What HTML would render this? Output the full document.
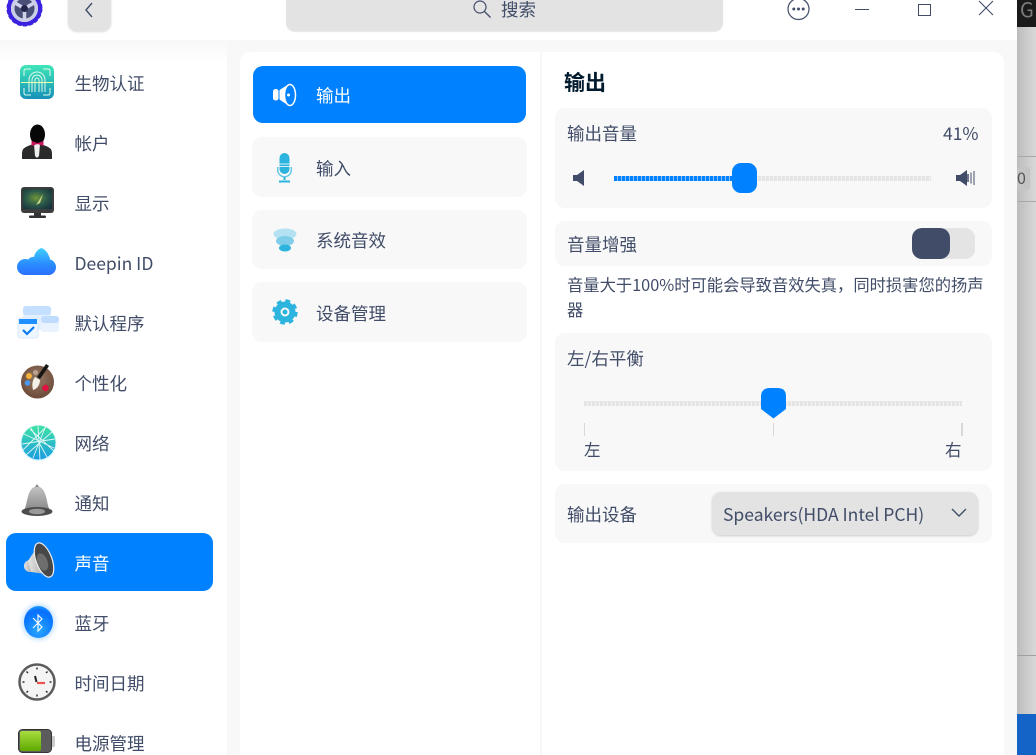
<!DOCTYPE html>
<html><head><meta charset="utf-8"><style>
*{box-sizing:border-box;margin:0;padding:0}
html,body{width:1036px;height:755px;overflow:hidden;background:#fff}
body{position:relative;font-family:"Liberation Sans","Noto Sans CJK SC",sans-serif;color:#414d68;font-size:17.5px}
.a{position:absolute}
.t{position:absolute;white-space:nowrap;line-height:24px;font-family:"Noto Sans CJK SC","Liberation Sans",sans-serif}
.c{position:absolute;background:#f8f8f8;border-radius:10px}
svg{position:absolute;overflow:visible}
</style></head><body>
<!-- right backdrop -->
<div class="a" style="left:1017px;top:0;width:19px;height:755px;background:linear-gradient(90deg,#bcbcbc,#d9d9d9)"></div>
<div class="a" style="left:1017px;top:0;width:19px;height:27px;background:#1a1a1a"></div>
<div class="t" style="left:1020px;top:-3px;color:#7d7d7d;font-size:20px">G</div>
<div class="a" style="left:1017px;top:156px;width:19px;height:1px;background:#a8a8a8"></div>
<div class="a" style="left:1017px;top:201px;width:19px;height:1px;background:#a8a8a8"></div>
<div class="a" style="left:1017px;top:167px;width:13px;height:23px;background:#c4c4c4;border-radius:3px"></div>
<div class="t" style="left:1017px;top:165px;color:#555;font-size:16px">0</div>
<div class="a" style="left:1017px;top:655px;width:19px;height:1px;background:#a0a0a0"></div>
<div class="a" style="left:1017px;top:714px;width:19px;height:41px;background:#1464c8"></div>
<!-- window -->
<div class="a" style="left:0;top:0;width:1017px;height:755px;background:#fff"></div>
<div class="a" style="left:0;top:40px;width:1017px;height:715px;background:#f8f8f8"></div>
<div class="a" style="left:0;top:40px;width:227px;height:715px;background:linear-gradient(#f8f8f8,#fff 22px)"></div>
<div class="a" style="left:240px;top:52px;width:300px;height:703px;background:#fff;border-radius:10px 0 0 0"></div>
<div class="a" style="left:542px;top:52px;width:462px;height:703px;background:#fff;border-radius:0 10px 0 0"></div>
<!-- titlebar -->
<svg style="left:7px;top:-9px" width="35" height="35" viewBox="0 0 35 35"><circle cx="17.500" cy="17.500" r="15.500" fill="none" stroke="#3a22e0" stroke-width="4"/><circle cx="17.500" cy="17.500" r="17" fill="none" stroke="#3a22e0" stroke-width="2" stroke-dasharray="4 2"/><circle cx="17.500" cy="17.500" r="13.500" fill="#c9cde6"/><circle cx="17.500" cy="17.500" r="10" fill="#4a4f78"/><path d="M17.500 17.500L8 12M17.500 17.500L27 12M17.500 17.500V29" stroke="#cfd2ea" stroke-width="3.500"/><circle cx="17.500" cy="17.500" r="3.500" fill="#23264a"/></svg>
<div class="a" style="left:68px;top:-10px;width:43px;height:41px;background:#e3e3e3;border-radius:9px;box-shadow:0 1px 2px rgba(0,0,0,.15)"></div>
<svg style="left:84px;top:2px" width="10" height="15"><path d="M8 1L2 8l6 7" fill="none" stroke="#414d68" stroke-width="1.400"/></svg>
<div class="a" style="left:286px;top:-10px;width:437px;height:41px;background:#e3e3e3;border-radius:9px;box-shadow:0 1px 1px rgba(0,0,0,.1)"></div>
<svg style="left:472px;top:0" width="20" height="18"><circle cx="8" cy="7" r="6" fill="none" stroke="#414d68" stroke-width="1.200"/><path d="M12.500 11.500l6 6" stroke="#414d68" stroke-width="1.300"/></svg>
<div class="t" style="left:501px;top:-2px;font-size:17.500px">搜索</div>
<svg style="left:787px;top:-3px" width="24" height="24"><circle cx="11.500" cy="12" r="10.500" fill="none" stroke="#414d68" stroke-width="1.200"/><circle cx="6.800" cy="12" r="1.500" fill="#414d68"/><circle cx="11.500" cy="12" r="1.500" fill="#414d68"/><circle cx="16.200" cy="12" r="1.500" fill="#414d68"/></svg>
<div class="a" style="left:855px;top:9px;width:14px;height:1px;background:#414d68"></div>
<div class="a" style="left:918px;top:4px;width:13px;height:12px;border:1px solid #414d68"></div>
<svg style="left:978px;top:0" width="16" height="16"><path d="M1 1l14 14M15 1L1 15" stroke="#414d68" stroke-width="1.100"/></svg>
<!-- sidebar -->
<div class="a" style="left:6px;top:533px;width:207px;height:58px;background:#0081ff;border-radius:10px"></div>
<div class="t" style="left:74.500px;top:72px">生物认证</div>
<div class="t" style="left:74.500px;top:132px">帐户</div>
<div class="t" style="left:74.500px;top:192px">显示</div>
<div class="t" style="left:74.500px;top:252px">Deepin ID</div>
<div class="t" style="left:74.500px;top:312px">默认程序</div>
<div class="t" style="left:74.500px;top:372px">个性化</div>
<div class="t" style="left:74.500px;top:432px">网络</div>
<div class="t" style="left:74.500px;top:492px">通知</div>
<div class="t" style="left:74.500px;top:552px;color:#fff">声音</div>
<div class="t" style="left:74.500px;top:612px">蓝牙</div>
<div class="t" style="left:74.500px;top:672px">时间日期</div>
<div class="t" style="left:74.500px;top:732px">电源管理</div>
<!-- biometric -->
<svg style="left:20px;top:65px" width="34" height="35" viewBox="0 0 34 35"><defs><linearGradient id="g1" x1="0" y1="0" x2="0" y2="1"><stop offset="0" stop-color="#3fe6b8"/><stop offset="1" stop-color="#1690b8"/></linearGradient></defs><rect width="34" height="34" rx="6" fill="url(#g1)"/><g fill="none" stroke="#dffbe8" stroke-width="1"><path d="M9 27V15a8 8 0 0 1 16 0v12M12 27V15a5 5 0 0 1 10 0v12M15 27V15a2 2 0 0 1 4 0v12M4 11V6q0-2 2-2h5M23 4h5q2 0 2 2v5M4 23v5q0 2 2 2h5M30 23v5q0 2-2 2h-5"/></g><path d="M1 17.500h32" stroke="#efffb0" stroke-width="1"/></svg>
<!-- account -->
<svg style="left:21px;top:124px" width="32" height="36" viewBox="0 0 32 36"><path d="M1 35v-6q0-5 6-7l5-2h8l5 2q6 2 6 7v6z" fill="#2b2b2b"/><ellipse cx="16.500" cy="10.500" rx="7.500" ry="10" fill="#070707"/><path d="M13 20h6l-1 12-2 2-2-2z" fill="#eee"/><path d="M10.500 17l6 2 6-2v5l-6-2-6 2z" fill="#c8145c"/></svg>
<!-- display -->
<svg style="left:21px;top:187px" width="34" height="32" viewBox="0 0 34 32"><defs><radialGradient id="g5" cx=".45" cy=".45" r=".7"><stop offset="0" stop-color="#6f9638"/><stop offset=".5" stop-color="#2c5a4a"/><stop offset="1" stop-color="#16303c"/></radialGradient></defs><rect width="33" height="26" rx="3" fill="#3d3d3d"/><rect x="2" y="2" width="29" height="20" fill="url(#g5)"/><path d="M15 18L22 7 19 16z" fill="#c7d68a"/><rect x="13" y="26" width="7" height="3" fill="#333"/><rect x="8" y="28.500" width="17" height="2.500" rx="1" fill="#333"/></svg>
<!-- cloud -->
<svg style="left:17px;top:248px" width="42" height="30" viewBox="0 0 42 30"><defs><linearGradient id="g2" x1="0" y1="0" x2="0" y2="1"><stop offset="0" stop-color="#3fd0ff"/><stop offset=".6" stop-color="#2a8cff"/><stop offset="1" stop-color="#2b70ff"/></linearGradient></defs><path d="M8 27a7.500 7.500 0 0 1 0-16q2 0 3 .500c2-2 4-3 6-2.500a13 13 0 0 1 7-9q5 1 8 8 1 2 1 3.500a8 8 0 0 1 0 15.500z" fill="url(#g2)"/></svg>
<!-- default apps -->
<svg style="left:18px;top:305px" width="42" height="36" viewBox="0 0 42 36"><rect x="5" y="1" width="28" height="24" rx="3" fill="#e4f0ff"/><rect x="5" y="1" width="28" height="9" rx="3" fill="#c4dfff"/><rect x="23" y="11" width="18" height="16" rx="3" fill="#e8f3ff"/><rect x="23" y="11" width="18" height="7" rx="3" fill="#bfdcff"/><rect x="0" y="13" width="20" height="20" rx="2" fill="#eef6ff" stroke="#d8e8ff"/><rect x="1" y="14" width="18" height="5" fill="#1e90ff"/><path d="M5 25l4 4 7-7" fill="none" stroke="#0a7cf0" stroke-width="2.200"/></svg>
<!-- palette -->
<svg style="left:21px;top:363px" width="34" height="37" viewBox="0 0 34 37"><defs><radialGradient id="g6" cx=".5" cy=".4" r=".6"><stop offset="0" stop-color="#947a66"/><stop offset="1" stop-color="#6e4a38"/></radialGradient></defs><circle cx="16.500" cy="19" r="16.500" fill="url(#g6)"/><circle cx="8" cy="13" r="3" fill="#f3b13a"/><circle cx="6.500" cy="20" r="2.800" fill="#4a9af0"/><circle cx="14.500" cy="9.500" r="2.500" fill="#b9a493"/><circle cx="24.500" cy="25" r="3.200" fill="#e01040"/><path d="M25 1l3 2-9 13-3-2z" fill="#151515"/><path d="M14 14l5 3c0 5-3 9-7 10q-2-8 2-13z" fill="#f3f0e8"/></svg>
<!-- network -->
<svg style="left:21px;top:425px" width="35" height="36" viewBox="0 0 35 36"><defs><linearGradient id="g3" x1="0" y1="0" x2="0" y2="1"><stop offset="0" stop-color="#3fe3a6"/><stop offset="1" stop-color="#1a9ce0"/></linearGradient></defs><circle cx="17.500" cy="18" r="18" fill="#aef0ff" opacity=".5"/><circle cx="17.500" cy="17.500" r="17" fill="url(#g3)"/><g stroke="#fff" stroke-width=".9" opacity=".85"><path d="M17 1l2 34M3 9l30 14M31 7L5 30M1 19l33-5M10 3l16 29M24 3L12 33M2 25l23-23M33 26L9 4"/></g></svg>
<!-- bell -->
<svg style="left:21px;top:483px" width="32" height="36" viewBox="0 0 32 36"><defs><linearGradient id="g4" x1="0" y1="0" x2="0" y2="1"><stop offset="0" stop-color="#c4c4c4"/><stop offset="1" stop-color="#8a8a8a"/></linearGradient></defs><path d="M3 27C7 22 5 5 16 3c11 2 9 19 13 24z" fill="url(#g4)"/><path d="M14 4l2-3 2 3z" fill="#888"/><ellipse cx="16" cy="28.500" rx="15.500" ry="4.500" fill="#4d4d4d"/><ellipse cx="16" cy="28.500" rx="8" ry="2.800" fill="#999"/></svg>
<!-- speaker -->
<svg style="left:23px;top:542px" width="34" height="36" viewBox="0 0 34 36"><defs><linearGradient id="g7" x1="0" y1="0" x2="1" y2="0"><stop offset="0" stop-color="#e6e6e6"/><stop offset="1" stop-color="#8c8c8c"/></linearGradient></defs><circle cx="7" cy="24" r="6" fill="url(#g7)"/><path d="M5 19L16 2l14 31-22-3z" fill="url(#g7)"/><ellipse cx="21" cy="18" rx="8" ry="18" transform="rotate(-20 21 18)" fill="#474747" stroke="#eee" stroke-width="1.200"/><ellipse cx="19.500" cy="20" rx="5" ry="9" transform="rotate(-20 19.500 20)" fill="#6e6e6e"/></svg>
<!-- bluetooth -->
<div class="a" style="left:24px;top:606px;width:29px;height:32px;border-radius:50%;background:radial-gradient(circle at 50% 75%,#2aa8ff,#0a78ff 55%,#0a70ff 70%,#28c0ff);box-shadow:0 0 6px 1px #a8d4ff"></div>
<svg style="left:31px;top:614px" width="14" height="18"><path d="M2 4l9 9-4 4V1l4 4-9 9" fill="none" stroke="#fff" stroke-width="1.100"/></svg>
<!-- clock -->
<svg style="left:18px;top:663px" width="38" height="38" viewBox="0 0 38 38"><circle cx="19" cy="19" r="17.500" fill="#f4f4f4" stroke="#5c5c5c" stroke-width="2.500"/><g stroke="#333" stroke-width="1.500"><path d="M19 4.500v2M19 31.500v2M4.500 19h2M31.500 19h2M8.500 8.500l1.500 1.500M28 28l1.500 1.500M29.500 8.500L28 10M8.500 29.500L10 28"/></g><path d="M17 13l1.500 6" stroke="#222" stroke-width="2"/><path d="M19 20h8" stroke="#ef5050" stroke-width="2.200"/></svg>
<!-- battery -->
<svg style="left:18px;top:729px" width="38" height="26" viewBox="0 0 38 26"><defs><linearGradient id="g8" x1="0" y1="0" x2="0" y2="1"><stop offset="0" stop-color="#a8dc40"/><stop offset="1" stop-color="#5fa800"/></linearGradient></defs><rect x="33" y="7" width="4" height="11" rx="1.500" fill="#ccc"/><rect x=".5" y=".5" width="33" height="23" rx="4" fill="#5c5c5c" stroke="#333"/><rect x="2" y="2" width="21" height="20" rx="2" fill="url(#g8)"/></svg>
<!-- mid list -->
<div class="a" style="left:253px;top:66px;width:273px;height:57px;background:#0081ff;border-radius:10px"></div>
<div class="c" style="left:252px;top:137px;width:275px;height:60px"></div>
<div class="c" style="left:252px;top:210px;width:275px;height:59px"></div>
<div class="c" style="left:252px;top:282px;width:275px;height:60px"></div>
<div class="t" style="left:316px;top:84px;color:#fff">输出</div>
<div class="t" style="left:316px;top:157px">输入</div>
<div class="t" style="left:316px;top:229px">系统音效</div>
<div class="t" style="left:316px;top:302px">设备管理</div>
<svg style="left:273px;top:83px" width="24" height="24" viewBox="0 0 24 24"><rect x="0" y="6" width="5.500" height="11.500" rx="2.500" fill="#fff"/><path d="M6.500 7L16 1v22L6.500 16.500z" fill="#fff"/><ellipse cx="17" cy="12" rx="5.500" ry="10.500" fill="#0081ff" stroke="#fff" stroke-width="1.500"/><circle cx="15.500" cy="12" r="1.500" fill="#fff"/></svg>
<svg style="left:277px;top:153px" width="15" height="30" viewBox="0 0 15 30"><rect x="2.500" y="0" width="10" height="21" rx="5" fill="#2cb4de"/><path d="M2.500 11h10M2.500 13.500h10" stroke="#d6eff8" stroke-width="1"/><path d="M.7 14v3a6.800 6.800 0 0 0 13.600 0v-3" fill="none" stroke="#5cc6e6" stroke-width="1.400"/><path d="M7.500 24v3M2 28.500h11" stroke="#2cb4de" stroke-width="2"/></svg>
<svg style="left:273px;top:228px" width="24" height="26" viewBox="0 0 24 26"><ellipse cx="12" cy="6" rx="11.500" ry="5.500" fill="#b4e2f2"/><ellipse cx="12" cy="13" rx="9" ry="5" fill="#7fcde8"/><ellipse cx="12" cy="20" rx="6" ry="3.500" fill="#2cb4de"/></svg>
<svg style="left:272px;top:299px" width="26" height="26" viewBox="0 0 26 26"><circle cx="13" cy="13" r="7.500" fill="none" stroke="#2cb4de" stroke-width="6"/><circle cx="13" cy="13" r="11.200" fill="none" stroke="#2cb4de" stroke-width="3" stroke-dasharray="4.800 4"/><circle cx="13" cy="13" r="2.500" fill="#2cb4de"/></svg>
<!-- right -->
<div class="t" style="left:564px;top:70px;font-size:21px;font-weight:700;color:#001a2e">输出</div>
<div class="c" style="left:555px;top:108px;width:437px;height:100px"></div>
<div class="t" style="left:567px;top:122px">输出音量</div>
<div class="t" style="left:943px;top:122px">41%</div>
<svg style="left:573px;top:170px" width="12" height="16"><path d="M0 5h4l7-5v16l-7-5H0z" fill="#414d68"/></svg>
<div class="a" style="left:614px;top:176px;width:120px;height:5px;background:repeating-linear-gradient(90deg,#0081ff 0 3px,#8cc4ff 3px 4px)"></div>
<div class="a" style="left:750px;top:176px;width:181px;height:5px;background:repeating-linear-gradient(90deg,#e4e4e4 0 3px,#f2f2f2 3px 4px)"></div>
<div class="a" style="left:732px;top:163px;width:25px;height:30px;background:#0081ff;border-radius:9px"></div>
<svg style="left:956px;top:170px" width="19" height="16"><path d="M0 5h4l7-5v16l-7-5H0z" fill="#414d68"/><path d="M12 4v8" stroke="#414d68" stroke-width="1.500"/><path d="M15 2.500v11M18 1v14" stroke="#414d68" stroke-width="1"/></svg>
<div class="c" style="left:555px;top:221px;width:437px;height:45px"></div>
<div class="t" style="left:567px;top:233px">音量增强</div>
<div class="a" style="left:912px;top:228px;width:63px;height:31px;background:#e4e4e4;border-radius:10px"></div>
<div class="a" style="left:912px;top:228px;width:38px;height:31px;background:#414d68;border-radius:10px"></div>
<div class="t" style="left:567px;top:272px;font-size:16.300px;width:420px;white-space:normal;line-height:25px">音量大于100%时可能会导致音效失真，同时损害您的扬声器</div>
<div class="c" style="left:555px;top:333px;width:437px;height:138px"></div>
<div class="t" style="left:567px;top:347px">左/右平衡</div>
<div class="a" style="left:584px;top:401px;width:378px;height:5px;background:repeating-linear-gradient(90deg,#e4e4e4 0 3px,#f2f2f2 3px 4px)"></div>
<svg style="left:760px;top:388px" width="27" height="31"><path d="M0 9Q0 0 9 0h8q9 0 9 8v13l-13 9.500L0 21z" fill="#0081ff" transform="translate(1 0) scale(.96 1)"/></svg>
<div class="a" style="left:584px;top:423px;width:1px;height:13px;background:#d8d8d8"></div>
<div class="a" style="left:773px;top:423px;width:1px;height:13px;background:#d8d8d8"></div>
<div class="a" style="left:961px;top:423px;width:2px;height:13px;background:#d8d8d8"></div>
<div class="t" style="left:584px;top:437px;font-size:16.500px">左</div>
<div class="t" style="left:945px;top:437px;font-size:16.500px">右</div>
<div class="c" style="left:555px;top:484px;width:437px;height:59px"></div>
<div class="t" style="left:567px;top:503px">输出设备</div>
<div class="a" style="left:712px;top:492px;width:266px;height:43px;background:#e3e3e3;border-radius:9px;box-shadow:0 1px 2px rgba(0,0,0,.18)"></div>
<div class="t" style="left:723px;top:503px">Speakers(HDA Intel PCH)</div>
<svg style="left:951px;top:508px" width="16" height="10"><path d="M1 1l7 7 7-7" fill="none" stroke="#414d68" stroke-width="1.400"/></svg>
</body></html>
